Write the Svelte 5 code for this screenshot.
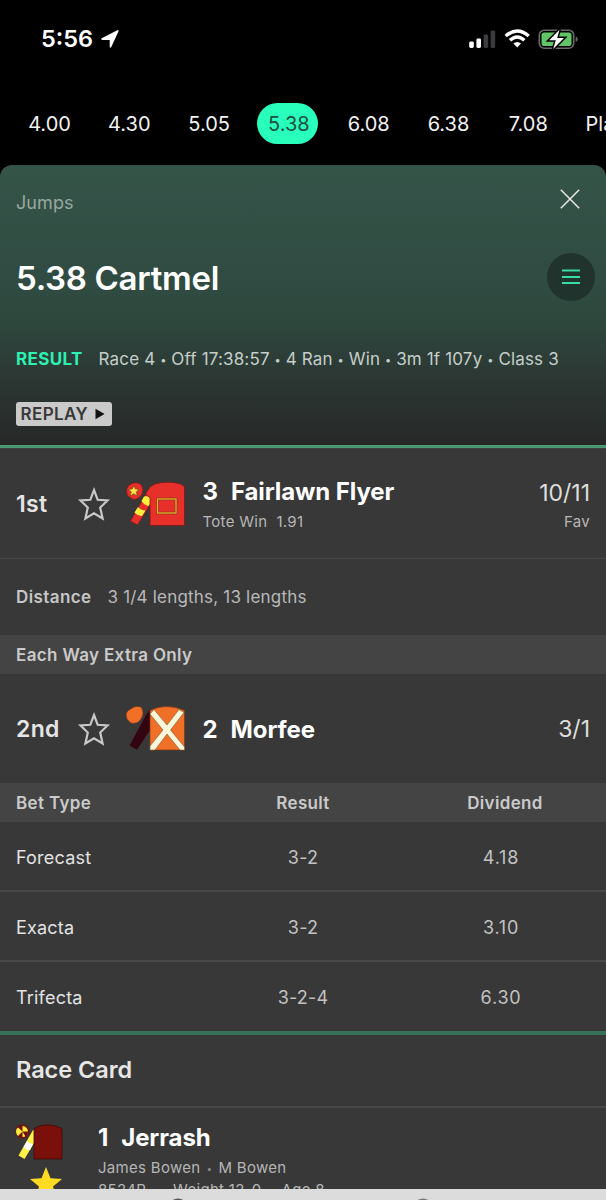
<script lang="ts">
	const times = ['4.00', '4.30', '5.05', '5.38', '6.08', '6.38', '7.08', 'Placepot'];
	let selected = $state('5.38');

	const details = ['Race 4', 'Off 17:38:57', '4 Ran', 'Win', '3m 1f 107y', 'Class 3'];

	const bets = [
		{ type: 'Forecast', result: '3-2', dividend: '4.18' },
		{ type: 'Exacta', result: '3-2', dividend: '3.10' },
		{ type: 'Trifecta', result: '3-2-4', dividend: '6.30' }
	];

	const placed = [
		{ position: '1st', number: 3, name: 'Fairlawn Flyer', odds: '10/11', silk: 'red' },
		{ position: '2nd', number: 2, name: 'Morfee', odds: '3/1', silk: 'orange' }
	];
</script>

{#snippet star()}
	<svg class="star" width="34" height="36" viewBox="0 0 34 36">
		<path d="M17 4 L20.7 13.8 L30.5 14.500 L23.200 21.500 L25.600 32.500 L17 27.300 L8.400 32.500 L10.800 21.500 L3.500 14.500 L13.300 13.800Z" />
	</svg>
{/snippet}

{#snippet silk(kind: string)}
	<svg class="silk" width="60" height="46" viewBox="0 0 60 46">
		{#if kind === 'red'}
			<path d="M1.500 14.500 Q-1.500 6.500 5 3 Q11 0 15.500 4 Q18.500 9 15.500 14 Q11 20 6 17.800Z" fill="#e8302a" stroke="#7d1c18" stroke-width=".8" />
			<path d="M7.800 4.800 L9.400 8 L13 8.300 L10.300 10.900 L11.300 15 L7.800 12.800 L4.200 15 L5.200 10.900 L2.600 8.300 L6.200 8Z" fill="#ffe14a" stroke="#7a4a10" stroke-width=".7" />
			<path d="M20 13 L4.500 40 L11.500 44 L24 23.500 V13Z" fill="#e8302a" stroke="#7d1c18" stroke-width=".7" />
			<path d="M18 15.500 Q21 14.500 24 16.500 V23 L22.500 25 Q18 24 15.500 20Z" fill="#fff03c" />
			<path d="M12 26 Q15 29.500 19.500 29.500 L16 35 Q11 34.500 8.500 31.500Z" fill="#fff03c" />
			<path d="M19.500 14 Q22 6 29 3 Q41 -.5 54 2.800 L58.500 5.500 V44.500 H24 V17 Q22 14 19.500 14Z" fill="#e8302a" stroke="#7d1c18" stroke-width=".8" />
			<rect x="31.500" y="18" width="18.500" height="14" fill="none" stroke="#8b3014" stroke-width="2.600" />
			<rect x="31.500" y="18" width="18.500" height="14" fill="none" stroke="#e3b52c" stroke-width="1.300" />
		{:else}
			<path d="M1 13 Q-1.500 6 4 3.500 Q10 -1.500 15.500 1.500 Q18.500 7 15.500 12 Q12 19 4.500 16.800Z" fill="#f07028" stroke="#7c3815" stroke-width=".6" />
			<path d="M24 3.500 L20 9 L3.500 39.500 L11 43.800 L24 24Z" fill="#330510" />
			<path d="M24 4.500 Q40 -3.500 58.500 4.500 V44 H24Z" fill="#f07028" stroke="#7c3815" stroke-width=".7" />
			<path d="M24 8 L28 3.500 L41 19 L53 3.500 L58 6.500 L44.500 24 L58.500 41 V44 H54 L41 28 L29 44 H24 V40 L37 24Z" fill="#f8f7da" stroke="#7c5b32" stroke-width=".6" />
		{/if}
	</svg>
{/snippet}

<div class="phone">
	<header class="status">
		<span class="clock">5:56</span>
		<svg class="arrow" width="20" height="20" viewBox="0 0 20 20">
			<path d="M1.700 9.200 L17.300 1.200 Q19 .6 18.500 2.200 L11.300 18 Q10.200 19.500 9.700 17.800 V10.900 H2.400 Q.3 10.300 1.700 9.200Z" fill="#fff" />
		</svg>
		<svg class="indicators" width="112" height="24" viewBox="0 0 112 24">
			<rect x="1.200" y="14.500" width="4.600" height="6.500" rx="1.400" fill="#fff" />
			<rect x="8.400" y="11.500" width="4.600" height="9.500" rx="1.400" fill="#fff" />
			<rect x="15.600" y="7.500" width="4.600" height="13.500" rx="1.400" fill="#3b3b3d" />
			<rect x="22.600" y="3.500" width="4.600" height="17.500" rx="1.400" fill="#3b3b3d" />
			<g fill="none" stroke="#fff" stroke-width="3.400">
				<path d="M37.700 9 Q49.200 -1 60.700 9" />
				<path d="M42 13.300 Q49.200 6.700 56.400 13.300" />
			</g>
			<path d="M45.400 16.600 Q49.200 13.500 53 16.600 L49.200 20.500Z" fill="#fff" />
			<rect x="71.300" y="3.200" width="34.400" height="18" rx="5" fill="none" stroke="#69696b" stroke-width="1.600" />
			<rect x="73.500" y="5.400" width="30" height="13.600" rx="2.800" fill="#62c466" />
			<path d="M107.700 9.400 Q109.700 10 109.700 12.200 Q109.700 14.500 107.700 15Z" fill="#69696b" />
			<path d="M91.500 2.700 L81.200 13.200 H87.800 L85.200 22 L96 10.900 H89.200Z" fill="#fff" stroke="#000" stroke-width="3" paint-order="stroke" />
		</svg>
	</header>

	<nav class="times">
		{#each times as time}
			<button class:active={time === selected} onclick={() => (selected = time)}>{time}</button>
		{/each}
	</nav>

	<section class="hero">
		<div class="hero-top">
			<span class="category">Jumps</span>
			<svg width="20" height="20" viewBox="0 0 20 20">
				<path d="M.8 .8 L19.200 19.200 M19.200 .8 L.8 19.200" stroke="#e6ebe8" stroke-width="1.500" />
			</svg>
		</div>
		<div class="hero-title">
			<h1>5.38 Cartmel</h1>
			<span class="menu">
				<svg width="18" height="16" viewBox="0 0 18 16">
					<path d="M0 1.500 H18 M0 8 H18 M0 14 H18" stroke="#35dda5" stroke-width="1.800" />
				</svg>
			</span>
		</div>
		<div class="meta">
			<b>RESULT</b>
			<span>{#each details as detail, i}{#if i > 0}<i>•</i>{/if}{detail}{/each}</span>
		</div>
		<span class="replay">
			<span>REPLAY</span>
			<svg width="10" height="12" viewBox="0 0 10 12"><path d="M.5 .8 L9.500 6 L.5 11.200Z" fill="#111" /></svg>
		</span>
	</section>

	{#each placed as horse, i}
		<div class="runner" class:plain={i > 0}>
			<span class="position">{horse.position}</span>
			{@render star()}
			{@render silk(horse.silk)}
			<div class="horse">
				<strong><span class="number">{horse.number}</span>{horse.name}</strong>
				{#if i === 0}<small>Tote Win&nbsp; 1.91</small>{/if}
			</div>
			<div class="price">
				<span>{horse.odds}</span>
				{#if i === 0}<small>Fav</small>{/if}
			</div>
		</div>
		{#if i === 0}
			<div class="distance"><b>Distance</b><span>3 1/4 lengths, 13 lengths</span></div>
			<div class="band">Each Way Extra Only</div>
		{/if}
	{/each}

	<div class="band bet head"><span>Bet Type</span><span>Result</span><span>Dividend</span></div>
	<div class="bets">
		{#each bets as bet}
			<div class="bet line"><span class="type">{bet.type}</span><span>{bet.result}</span><span>{bet.dividend}</span></div>
		{/each}
	</div>

	<h2>Race Card</h2>

	<div class="card">
		<div class="card-icons">
			<svg class="card-silk" width="48" height="36" viewBox="0 0 48 36">
				<circle cx="7.500" cy="7.500" r="7" fill="#741009" />
				<path d="M7.500 7.500 V2 Q12.500 2.500 13 7.500Z M7.500 7.500 V13 Q12 13 13 7.500Z M7.500 7.500 H1 Q1 4.500 3 3.500Z M7.500 7.500 L3 12 Q1 10.500 1 7.500Z" fill="#ffec3d" />
				<path d="M7.500 7.500 H13.500 L11 13.500Z" fill="#741009" />
				<path d="M18 6 Q19.500 5 19.500 9 L19 19 L9.500 35 L3.500 31.500Z" fill="#fff04a" />
				<path d="M12 17 Q15 20.500 18 20 L15 26 Q11 26 8.500 23Z" fill="#fff" />
				<path d="M19 4.500 Q32 -3 47 4.500 V35 H19Z" fill="#7a1009" stroke="#3d0a07" stroke-width=".8" />
			</svg>
			<svg class="gold" width="34" height="32" viewBox="0 0 34 32">
				<path d="M17 0 L21.500 11.300 L33 12 L24 19.500 L27 31 L17 24.500 L7 31 L10 19.500 L1 12 L12.500 11.300Z" fill="#ffdc22" />
			</svg>
		</div>
		<div class="card-text">
			<strong><span class="number">1</span>Jerrash</strong>
			<small>James Bowen<i class="dot">•</i>M Bowen</small>
			<small class="form"><span>8524P</span><i>•</i><span>Weight 12-0</span><i>•</i><span>Age 8</span></small>
		</div>
	</div>

	<footer>
		<svg width="606" height="11" viewBox="0 0 606 11">
			<circle cx="178" cy="19.500" r="9" fill="none" stroke="#555" stroke-width="2" />
			<circle cx="423" cy="19.500" r="9" fill="none" stroke="#777" stroke-width="2" />
		</svg>
	</footer>
</div>

<style>
	:global(body) {
		background: #000;
	}

	.phone {
		display: flex;
		flex-direction: column;
		width: 606px;
		height: 1200px;
		overflow: hidden;
		background: #383838;
		color: #fff;
		font-family: Inter, 'Liberation Sans', sans-serif;
		font-size: 17px;
		white-space: nowrap;
	}

	.phone > * {
		flex-shrink: 0;
		box-sizing: border-box;
	}

	svg {
		display: block;
		flex-shrink: 0;
	}

	i {
		font-style: normal;
	}

	.status {
		display: flex;
		align-items: center;
		height: 78px;
		padding: 0 26px 0 41px;
		background: #000;
	}

	.clock {
		width: 58.5px;
		padding-bottom: 1px;
		font-size: 23.5px;
		font-weight: 600;
		letter-spacing: 0;
	}

	.indicators {
		margin-left: auto;
	}

	.times {
		display: flex;
		align-items: center;
		height: 103px;
		margin-bottom: -16px;
		padding: 0 0 12px 18px;
		gap: 18.8px;
		background: #000;
	}

	.times button {
		flex: none;
		width: 61px;
		height: 41px;
		padding: 0 0 0 2px;
		border: 0;
		border-radius: 21px;
		background: none;
		color: #f2f2f2;
		font: 400 20px Inter, sans-serif;
		text-align: center;
	}

	.times button:last-child {
		padding-left: 9px;
		text-align: left;
	}

	.times .active {
		background: #28ffbb;
		color: #214f40;
	}

	.hero {
		display: flex;
		flex-direction: column;
		align-items: flex-start;
		height: 283px;
		border-bottom: 3px solid #4b9876;
		border-radius: 12px 12px 0 0;
		background: linear-gradient(#355448 0, #314d43 100px, #2e473d 160px, #2b3532 220px, #272928 280px);
	}

	.hero-top,
	.hero-title {
		display: flex;
		justify-content: space-between;
		align-items: center;
		box-sizing: border-box;
		width: 100%;
		padding: 0 26px 0 16px;
	}

	.hero-top {
		height: 68px;
	}

	.category {
		padding-top: 7px;
		color: #98a8a1;
		font-size: 18px;
		letter-spacing: 0.1px;
	}

	.hero-title {
		height: 88px;
		padding-right: 11px;
	}

	h1 {
		margin: 0;
		padding-top: 1px;
		font-size: 33px;
		font-weight: 600;
		letter-spacing: -0.3px;
	}

	.menu {
		display: grid;
		place-items: center;
		width: 48px;
		height: 48px;
		border-radius: 50%;
		background: #20332c;
	}

	.meta {
		display: flex;
		gap: 16px;
		height: 75px;
		align-items: center;
		padding-left: 16px;
		color: #c6ceca;
		letter-spacing: 0.16px;
	}

	.meta b {
		color: #2ff0b3;
		letter-spacing: 0.35px;
	}

	.meta i {
		display: inline-block;
		width: 16px;
		font-size: 11px;
		text-align: center;
		vertical-align: 1px;
	}

	.replay {
		display: flex;
		align-items: center;
		gap: 7px;
		height: 24px;
		margin: 6px 0 0 15.5px;
		padding: 0 7px 0 5px;
		border-radius: 3px;
		background: #cacaca;
		color: #383838;
		font-weight: 600;
		letter-spacing: 0.4px;
	}

	.runner {
		display: flex;
		align-items: center;
		height: 110px;
		padding: 0 16px;
		border-top: 1px solid #414141;
	}

	.runner.plain {
		height: 109px;
		padding-top: 1px;
		border-top: 0;
	}

	.position {
		width: 61px;
		color: #e5e5e5;
		font-size: 23px;
		font-weight: 600;
		letter-spacing: 0.3px;
	}

	.star {
		fill: none;
		stroke: #c8c8c8;
		stroke-width: 2.2;
	}

	.silk {
		margin: 0 16.5px 0 15px;
	}

	.horse {
		display: flex;
		flex-direction: column;
		gap: 6px;
	}

	strong {
		font-size: 24px;
		font-weight: 700;
		letter-spacing: -0.1px;
	}

	.number {
		margin-right: 13px;
	}

	small {
		color: #b6b6b6;
		font-size: 15px;
		letter-spacing: 0.3px;
	}

	.price {
		display: flex;
		flex-direction: column;
		align-items: flex-end;
		gap: 5px;
		margin-left: auto;
		padding-top: 2px;
		color: #dedede;
		font-size: 23px;
	}

	.plain .price {
		padding-top: 0;
	}

	.distance {
		display: flex;
		gap: 16px;
		align-items: center;
		height: 77px;
		padding-left: 16px;
		border-top: 1px solid #484848;
		color: #b9b9b9;
		letter-spacing: 0.2px;
	}

	.distance b {
		color: #c6c6c6;
		font-weight: 600;
		letter-spacing: 0.4px;
	}

	.band {
		height: 39px;
		padding: 0 16px;
		background: #444;
		color: #cacaca;
		font-weight: 600;
		letter-spacing: 0.35px;
		line-height: 40px;
	}

	.bet {
		display: grid;
		grid-template-columns: 188px 198px 206px;
		align-items: center;
		padding: 0 0 0 16px;
		text-align: center;
	}

	.head {
		line-height: 38px;
	}

	.bet span:first-child {
		text-align: left;
	}

	.line {
		box-sizing: border-box;
		height: 70px;
		padding-top: 2px;
		border-bottom: 2px solid #484848;
		color: #c2c2c2;
		font-size: 18px;
		letter-spacing: 0.2px;
	}

	.line span:last-child {
		padding-right: 8px;
		letter-spacing: 0.8px;
	}

	.line:last-child {
		height: 73px;
		border-bottom: 4px solid #367057;
	}

	.type {
		color: #e2e2e2;
	}

	h2 {
		height: 73px;
		margin: 0;
		padding-left: 16px;
		border-bottom: 2px solid #484848;
		color: #e6e6e6;
		font-size: 23.5px;
		font-weight: 600;
		letter-spacing: -0.05px;
		line-height: 70px;
	}

	.card {
		display: flex;
		height: 81px;
		overflow: hidden;
	}

	.card-icons {
		width: 98px;
		padding: 16px 0 0 15px;
		box-sizing: border-box;
	}

	.gold {
		margin: 7px 0 0 14px;
	}

	.card-text {
		display: flex;
		flex-direction: column;
		padding-top: 15px;
	}

	.card-text small {
		margin-top: 6px;
	}

	.card-text .form {
		margin-top: 3px;
	}

	.card-text i {
		color: #888;
	}

	.dot {
		display: inline-block;
		width: 18px;
		font-size: 10px;
		text-align: center;
		vertical-align: 1px;
	}

	.form {
		display: flex;
	}

	.form i {
		width: 27px;
		font-size: 10px;
		line-height: 20px;
		text-align: center;
	}

	.form i:nth-of-type(2) {
		width: 20px;
	}

	footer {
		flex: 1;
		background: #dcdcdc;
	}
</style>
